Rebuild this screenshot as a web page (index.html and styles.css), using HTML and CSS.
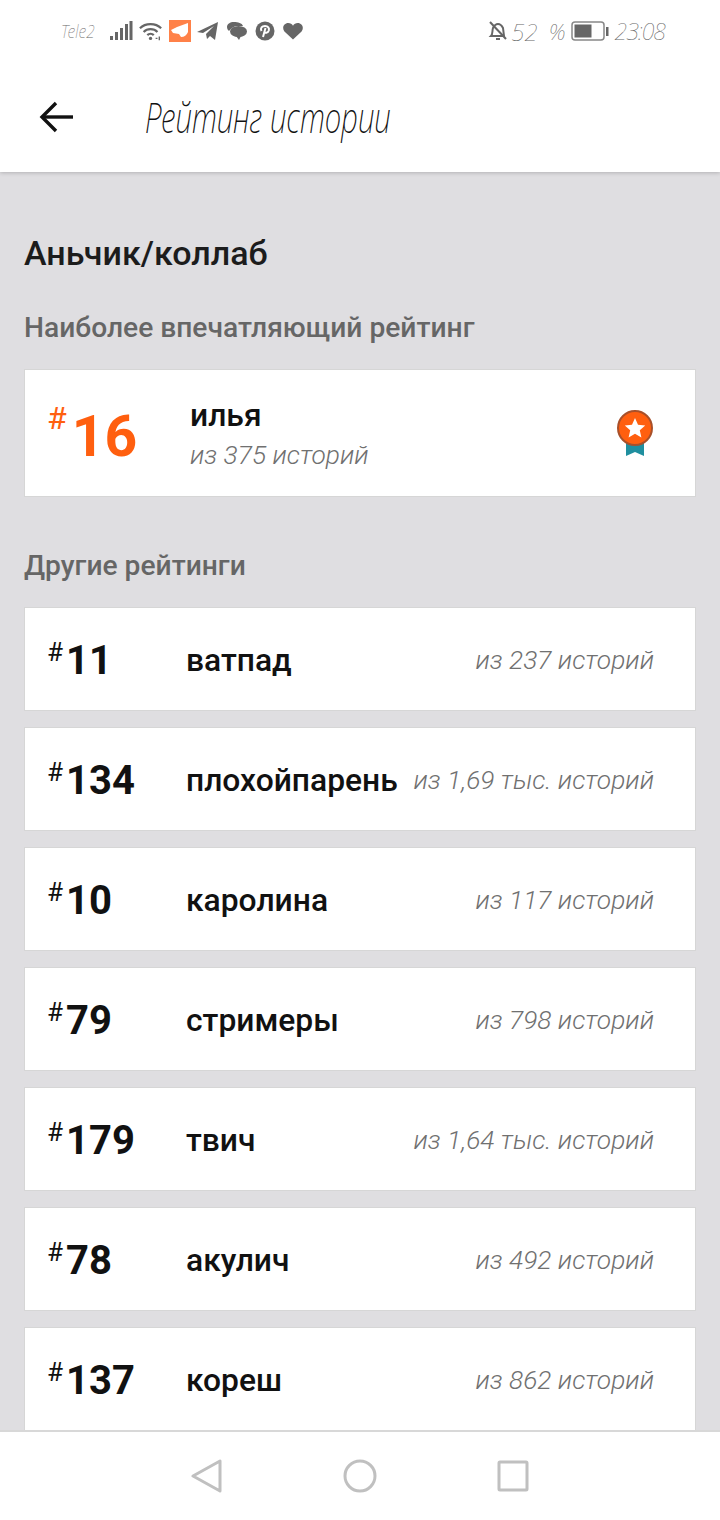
FILE: index.html
```html
<!DOCTYPE html>
<html lang="ru">
  <head>
    <meta charset="UTF-8" />
    <meta name="viewport" content="width=device-width, initial-scale=1.0" />
    <title>Рейтинг истории</title>
    <link rel="stylesheet" href="styles.css">
  </head>

  <body>
    <div class="page">
      <header class="top">
        <div class="status">
          <div class="status-left">
            <span class="hand carrier">Tele2</span>
            <svg class="ic" width="24" height="22" viewBox="0 0 24 22" fill="#666">
              <rect x="1" y="16" width="3" height="4"/><rect x="6" y="12" width="3" height="8"/><rect x="11" y="8" width="3" height="12"/><rect x="16" y="4" width="3" height="16"/><rect x="20.500" y="1" width="3" height="19"/>
            </svg>
            <svg class="ic" width="24" height="22" viewBox="0 0 26 22" fill="none" stroke="#666" stroke-width="2.400">
              <path d="M1 8c6-6 17-6 23 0"/><path d="M5 12c4-4 11-4 15 0"/><path d="M9 15.500c2-2 5-2 7 0"/>
              <circle cx="12.500" cy="19" r="1.800" fill="#666" stroke="none"/><path d="M18 19h2M22 17v4" stroke-width="1.500"/>
            </svg>
            <svg class="ic" width="22" height="22" viewBox="0 0 22 22">
              <rect width="22" height="22" fill="#ff8148"/>
              <path d="M2 10l6-3 11-4v9q-2 5-7 5l-2-3-6-1z" fill="#fff"/>
            </svg>
            <svg class="ic" width="22" height="20" viewBox="0 0 22 20" fill="#666">
              <path d="M0 11L21 1l-3 18-5-4-3 3-1-5 8-8-11 7z"/>
            </svg>
            <svg class="ic wide" width="20" height="18" viewBox="0 0 20 18" fill="#666">
              <path d="M7 0c-4 0-7 2-7 5 0 2 1 3 2 4 2-3 5-5 9-5h5c-1-3-5-4-9-4z"/><ellipse cx="11.500" cy="9.500" rx="8.500" ry="5.500"/><path d="M9 14l3 4 2-4z"/>
            </svg>
            <svg class="ic wide" width="20" height="20" viewBox="0 0 20 20">
              <circle cx="10" cy="10" r="9.500" fill="#666"/>
              <path d="M8 16l2.500-9M6.500 10c-1.500-3 .5-5 3.500-5s4.500 2 3.800 4.500c-.8 2.500-3.800 3-4.800 1" fill="none" stroke="#fff" stroke-width="2"/>
            </svg>
            <svg class="ic wide" width="20" height="18" viewBox="0 0 21 18" fill="#666">
              <path d="M10.500 18L1.500 9.500C-1.500 5.500 1 .5 5.500.5c2.200 0 4 1 5 3 1-2 2.800-3 5-3 4.500 0 7 5 4 9z"/>
            </svg>
          </div>
          <div class="status-right">
            <svg class="ic" width="20" height="22" viewBox="0 0 20 22" fill="none" stroke="#666" stroke-width="2">
              <path d="M3 16c2-2 1-5 2-8 1-2 3-4 5-4s4 2 5 4l1 8z"/><path d="M2 2l16 17"/><path d="M8 19h4"/>
            </svg>
            <span class="hand level">52</span>
            <span class="hand pct">%</span>
            <svg class="ic battery" width="38" height="22" viewBox="0 0 38 22" fill="none">
              <rect x="1" y="2" width="32" height="18" rx="3" stroke="#888" stroke-width="1.500"/>
              <rect x="3.500" y="4.500" width="17" height="13" fill="#666"/>
              <rect x="35" y="7" width="2.500" height="9" fill="#666"/>
            </svg>
            <span class="hand clock">23:08</span>
          </div>
        </div>
        <div class="toolbar">
          <svg class="back" width="34" height="32" viewBox="0 0 34 32" fill="none" stroke="#111" stroke-width="3.400">
            <path d="M34 16H3"/><path d="M17 2L3 16l14 14"/>
          </svg>
          <h1 class="hand title">Рейтинг истории</h1>
        </div>
      </header>

      <main class="content">
        <h2 class="story">Аньчик/коллаб</h2>
        <h3 class="sub">Наиболее впечатляющий рейтинг</h3>
        <div class="card best">
          <div class="best-rank"><span class="hash">#</span>16</div>
          <div class="best-info">
            <div class="tag">илья</div>
            <div class="of">из 375 историй</div>
          </div>
          <svg class="medal" width="38" height="46" viewBox="0 0 38 46">
            <path d="M10 28h18v18l-9-4-9 4z" fill="#1f8f9f"/>
            <circle cx="19" cy="18" r="17" fill="#ff5f0f" stroke="#a8502a" stroke-width="2"/>
            <path d="M19 8l3 6.800 7.200.7-5.400 4.800 1.600 7.200-6.400-3.800-6.400 3.800 1.600-7.200-5.400-4.800 7.200-.7z" fill="#fff"/>
          </svg>
        </div>

        <h3 class="sub sub-other">Другие рейтинги</h3>
        <div class="list">
          <div class="card row"><div class="rank"><span class="hash">#</span>11</div><div class="tag">ватпад</div><div class="of">из 237 историй</div></div>
          <div class="card row"><div class="rank"><span class="hash">#</span>134</div><div class="tag">плохойпарень</div><div class="of">из 1,69 тыс. историй</div></div>
          <div class="card row"><div class="rank"><span class="hash">#</span>10</div><div class="tag">каролина</div><div class="of">из 117 историй</div></div>
          <div class="card row"><div class="rank"><span class="hash">#</span>79</div><div class="tag">стримеры</div><div class="of">из 798 историй</div></div>
          <div class="card row"><div class="rank"><span class="hash">#</span>179</div><div class="tag">твич</div><div class="of">из 1,64 тыс. историй</div></div>
          <div class="card row"><div class="rank"><span class="hash">#</span>78</div><div class="tag">акулич</div><div class="of">из 492 историй</div></div>
          <div class="card row"><div class="rank"><span class="hash">#</span>137</div><div class="tag">кореш</div><div class="of">из 862 историй</div></div>
        </div>
      </main>

      <nav class="navbar">
        <svg width="32" height="34" viewBox="0 0 32 34" fill="none" stroke="#c0c0c0" stroke-width="3" stroke-linejoin="round">
          <path d="M29 2v30L2 17z"/>
        </svg>
        <svg width="34" height="34" viewBox="0 0 34 34" fill="none" stroke="#c0c0c0" stroke-width="3">
          <circle cx="17" cy="17" r="15"/>
        </svg>
        <svg width="32" height="32" viewBox="0 0 32 32" fill="none" stroke="#c0c0c0" stroke-width="3" stroke-linejoin="round">
          <rect x="2" y="2" width="28" height="28" rx="1"/>
        </svg>
      </nav>
    </div>
  </body>
</html>
```

FILE: styles.css
```css
* {
  box-sizing: border-box;
}

body {
  margin: 0;
  font-family: Roboto, sans-serif;
  color: #111;
}

.page {
  width: 720px;
  height: 1520px;
  display: flex;
  flex-direction: column;
  overflow: hidden;
  background: #dfdee1;
}

/* header */
.top {
  height: 172px;
  flex: none;
  background: #fff;
  box-shadow: 0 1px 4px rgba(0, 0, 0, 0.2);
  position: relative;
  z-index: 1;
}

.status {
  height: 62px;
  display: flex;
  justify-content: space-between;
  align-items: center;
  padding: 0 55px 0 61px;
}

.status-left,
.status-right {
  display: flex;
  align-items: center;
}

.status-left {
  gap: 6px;
}

.ic {
  display: block;
  flex: none;
}

.wide {
  margin-left: 2px;
}

.hand {
  font-family: "Noto Sans", sans-serif;
  font-weight: 100;
  font-style: italic;
}

.carrier {
  font-size: 19px;
  color: #666;
  width: 42px;
  transform: scaleX(0.82);
  transform-origin: left center;
}

.level {
  font-size: 24px;
  color: #666;
  margin-left: 3px;
}

.pct {
  font-size: 22px;
  color: #666;
  margin-left: 11px;
  margin-right: 5px;
}

.clock {
  font-size: 23px;
  color: #666;
  margin-left: 6px;
  letter-spacing: -1px;
}

.toolbar {
  height: 110px;
  display: flex;
  align-items: center;
  padding: 0 0 0 39px;
}

.back {
  display: block;
}

.title {
  margin: 0 0 0 72px;
  font-size: 42px;
  font-weight: 200;
  line-height: 1;
  color: #111;
  transform: scaleX(0.71);
  transform-origin: left center;
  white-space: nowrap;
}

/* content */
.content {
  flex: 1;
  min-height: 0;
  overflow: hidden;
  padding: 0 24px;
}

.story {
  margin: 62px 0 0;
  font-size: 34px;
  line-height: 38px;
  font-weight: 500;
  color: #1c1c1c;
}

.sub {
  margin: 38px 0 0;
  font-size: 28.2px;
  line-height: 36px;
  font-weight: 500;
  color: #666;
}

.sub-other {
  margin-top: 51px;
}

.card {
  background: #fff;
  border: 1px solid #d6d6d6;
  display: flex;
  align-items: center;
}

.best {
  height: 128px;
  margin-top: 23px;
  padding: 0 41px 0 22px;
}

.best-rank {
  width: 143px;
  flex: none;
  font-size: 57px;
  line-height: 1;
  font-weight: 700;
  color: #ff5f0f;
}

.best-rank .hash {
  color: #ff5f0f;
  font-size: 32px;
  vertical-align: 27px;
  margin-right: 5px;
  font-weight: 400;
}

.best-info {
  flex: 1;
  margin-top: 1px;
}

.best-info .of {
  margin-top: 4px;
  text-align: left;
}

.tag {
  font-size: 31.8px;
  line-height: 38px;
  font-weight: 500;
  color: #111;
}

.of {
  font-size: 26.3px;
  line-height: 34px;
  font-weight: 300;
  font-style: italic;
  color: #707070;
  white-space: nowrap;
}

.medal {
  display: block;
}

.list {
  margin-top: 23px;
  display: flex;
  flex-direction: column;
  gap: 16px;
}

.row {
  height: 104px;
  flex: none;
  padding: 1px 41px 0 22px;
}

.rank {
  width: 139px;
  flex: none;
  font-size: 40px;
  line-height: 1;
  font-weight: 700;
  color: #111;
}

.rank .hash {
  font-size: 26px;
  font-weight: 400;
  vertical-align: 13px;
  margin-right: 3px;
}

.row .tag {
  flex: 1;
  white-space: nowrap;
}

/* bottom bar */
.navbar {
  height: 90px;
  flex: none;
  background: #fff;
  border-top: 2px solid #d8d8d8;
  display: flex;
  align-items: center;
  justify-content: center;
  gap: 120px;
}
```
